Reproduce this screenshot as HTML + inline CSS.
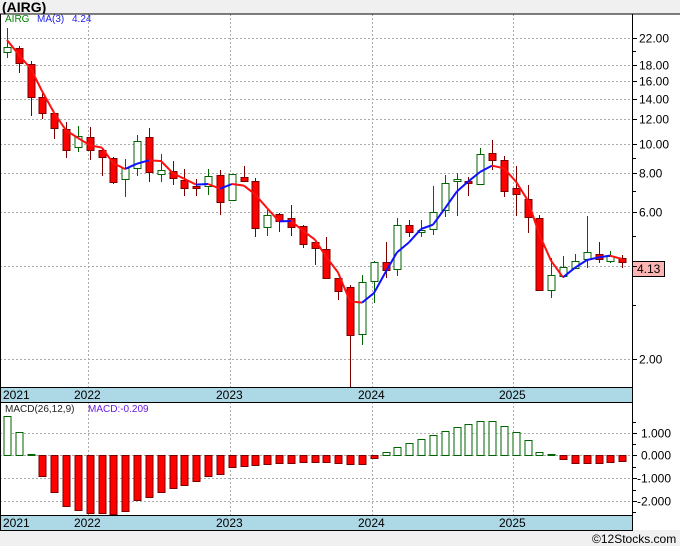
<!DOCTYPE html>
<html><head><meta charset="utf-8"><style>
html,body{margin:0;padding:0;background:#f0f0f0;width:680px;height:546px;overflow:hidden}
svg{display:block;font-family:"Liberation Sans",sans-serif}
</style></head><body>
<svg id="s" width="680" height="546" xmlns="http://www.w3.org/2000/svg">
<rect x="0" y="0" width="680" height="546" fill="#f0f0f0"/>
<text x="2" y="12" font-size="14" font-weight="bold" fill="#000">(AIRG)</text>
<rect x="0" y="14" width="680" height="516" fill="#fff"/>
<g id="grid" stroke="#aaa" stroke-width="1" stroke-dasharray="2,2"></g>
<g id="g"></g>
<line x1="0" y1="14" x2="680" y2="14" stroke="#000"/>
<line x1="0.5" y1="14" x2="0.5" y2="530" stroke="#000"/>
<line x1="632.5" y1="14" x2="632.5" y2="530" stroke="#000"/>
<rect x="0.5" y="387.5" width="632" height="15" fill="#add8e6" stroke="#000"/>
<rect x="0.5" y="515.5" width="632" height="15" fill="#add8e6" stroke="#000"/>
<g font-size="12" fill="#000">
<text x="3" y="399">2021</text><text x="74" y="399">2022</text><text x="216" y="399">2023</text><text x="358" y="399">2024</text><text x="499" y="399">2025</text>
<text x="3" y="527">2021</text><text x="74" y="527">2022</text><text x="216" y="527">2023</text><text x="358" y="527">2024</text><text x="499" y="527">2025</text>
</g>
<text x="5" y="22" font-size="10" fill="#008000">AIRG</text>
<text x="37" y="22" font-size="10" fill="#2222ee">MA(3)</text>
<text x="72" y="22" font-size="10" fill="#2222ee">4.24</text>
<text x="5" y="412" font-size="10" fill="#222">MACD(26,12,9)</text>
<text x="88" y="412" font-size="10" fill="#6a1be0">MACD:-0.209</text>
<rect x="632.5" y="261.5" width="32" height="15" fill="#ffb4b4" stroke="#000"/>
<text x="637" y="273" font-size="12" fill="#000">4.13</text>
<text x="592" y="543" font-size="12" fill="#000">©12Stocks.com</text>
</svg>
<script>
var s=document.getElementById('g'),gr=document.getElementById('grid'),sv=document.getElementById('s');
function el(t,a,p){var e=document.createElementNS('http://www.w3.org/2000/svg',t);for(var k in a)e.setAttribute(k,a[k]);(p||s).appendChild(e);return e;}
[88,230,372,513].forEach(function(x){el('line',{x1:x+.5,y1:14,x2:x+.5,y2:387},gr);el('line',{x1:x+.5,y1:402,x2:x+.5,y2:515},gr);});
function py(p){return 38+133.9*Math.log(22/p);}
[22,18,16,14,12,10,8,6,4,2].forEach(function(p){var y=Math.round(py(p))+.5;el('line',{x1:0,y1:y,x2:632,y2:y},gr);el('line',{x1:632,y1:y,x2:637,y2:y,stroke:'#000',"stroke-dasharray":"none"},sv);
if(p!==4){var t=el('text',{x:639,y:y+4,"font-size":12,fill:'#000'},sv);t.textContent=p.toFixed(2);}});
[20,9,7,5,3].forEach(function(p){var y=Math.round(py(p))+.5;el('line',{x1:632,y1:y,x2:636,y2:y,stroke:'#000'},sv);});
[[1,433],[0,455],[-1,478],[-2,501]].forEach(function(a){var y=a[1]+.5;el('line',{x1:0,y1:y,x2:632,y2:y},gr);el('line',{x1:632,y1:y,x2:637,y2:y,stroke:'#000'},sv);var t=el('text',{x:a[0]<0?637:641,y:y+4,"font-size":12,fill:'#000'},sv);t.textContent=a[0].toFixed(3);});
[422,444,467,490,512].forEach(function(y){el('line',{x1:632,y1:y+.5,x2:636,y2:y+.5,stroke:'#000'},sv);});
var C=[['g',47,52,28,58],['r',48,63,46,73],['r',64,97,61,116],['r',97,113,93,119],['r',113,128,113,139],['r',129,150,122,158],['g',136,147,126,152],['r',137,150,127,160],['r',150,157,148,176],['r',158,182,157,184],['g',168,179,159,197],['g',141,168,135,176],['r',137,172,128,182],['g',170,174,154,182],['r',171,178,161,185],['r',180,188,169,196],['r',186,188,179,196],['g',176,186,169,195],['r',175,202,170,215],['g',174,200,174,200],['r',177,181,166,181],['r',181,228,178,237],['g',215,227,210,236],['r',214,221,213,232],['r',218,227,205,236],['r',226,244,225,248],['r',242,248,242,265],['r',249,278,237,278],['r',278,291,278,300],['r',287,335,285,387],['g',282,334,275,345],['g',262,281,261,303],['r',262,270,242,278],['g',225,269,218,276],['r',225,232,220,237],['g',230,232,220,237],['g',212,229,186,235],['g',183,210,175,217],['g',179,181,173,216],['r',181,183,177,196],['g',154,184,148,184],['r',153,160,140,170],['r',160,191,156,197],['r',188,194,166,216],['r',199,217,185,233],['r',218,290,215,290],['g',275,290,258,298],['g',267,276,256,276],['g',261,268,254,268],['g',252,259,216,268],['r',254,259,242,263],['g',256,261,251,263],['r',258,262,255,268]];
var M=[416,432,454,476,492,506,510,513,513,514,511,500,497,492,488,485,481,476,474,467,466,465,464,463,463,462,462,462,463,464,464,458,452,447,443,439,435,431,427,424,421,421,426,432,440,452,454,459,463,463,463,462,461];
var cl=[];
C.forEach(function(c,i){var x=Math.round(7+i*11.83);var col=c[0]=='g'?'#006400':'#7a0000';
el('line',{x1:x+.5,y1:c[3],x2:x+.5,y2:c[4],stroke:col});
el('rect',{x:x-3,y:c[1]+.5,width:7,height:Math.max(1,c[2]-c[1]),fill:c[0]=='g'?'#fff':'#f00',stroke:col});
cl.push(c[0]=='g'?c[1]:c[2]);
var m=M[i];var up=m<455;el('rect',{x:x-3,y:(up?m:455)+.5,width:7,height:Math.max(1,Math.abs(m-455)),fill:up?'#fff':'#f00',stroke:up?'#006400':'#7a0000'});
});
var ma=[];for(var i=0;i<cl.length;i++){var a=cl.slice(Math.max(0,i-2),i+1);var v=a.reduce(function(p,q){return p+q},0)/a.length;ma.push(i==0?40:v);}
for(var i=1;i<ma.length;i++){var x0=Math.round(7+(i-1)*11.83),x1=Math.round(7+i*11.83);
el('line',{x1:x0,y1:ma[i-1],x2:x1,y2:ma[i],stroke:ma[i]<ma[i-1]?'#1010ff':'#ff1010',"stroke-width":2});}
</script>
</body></html>
